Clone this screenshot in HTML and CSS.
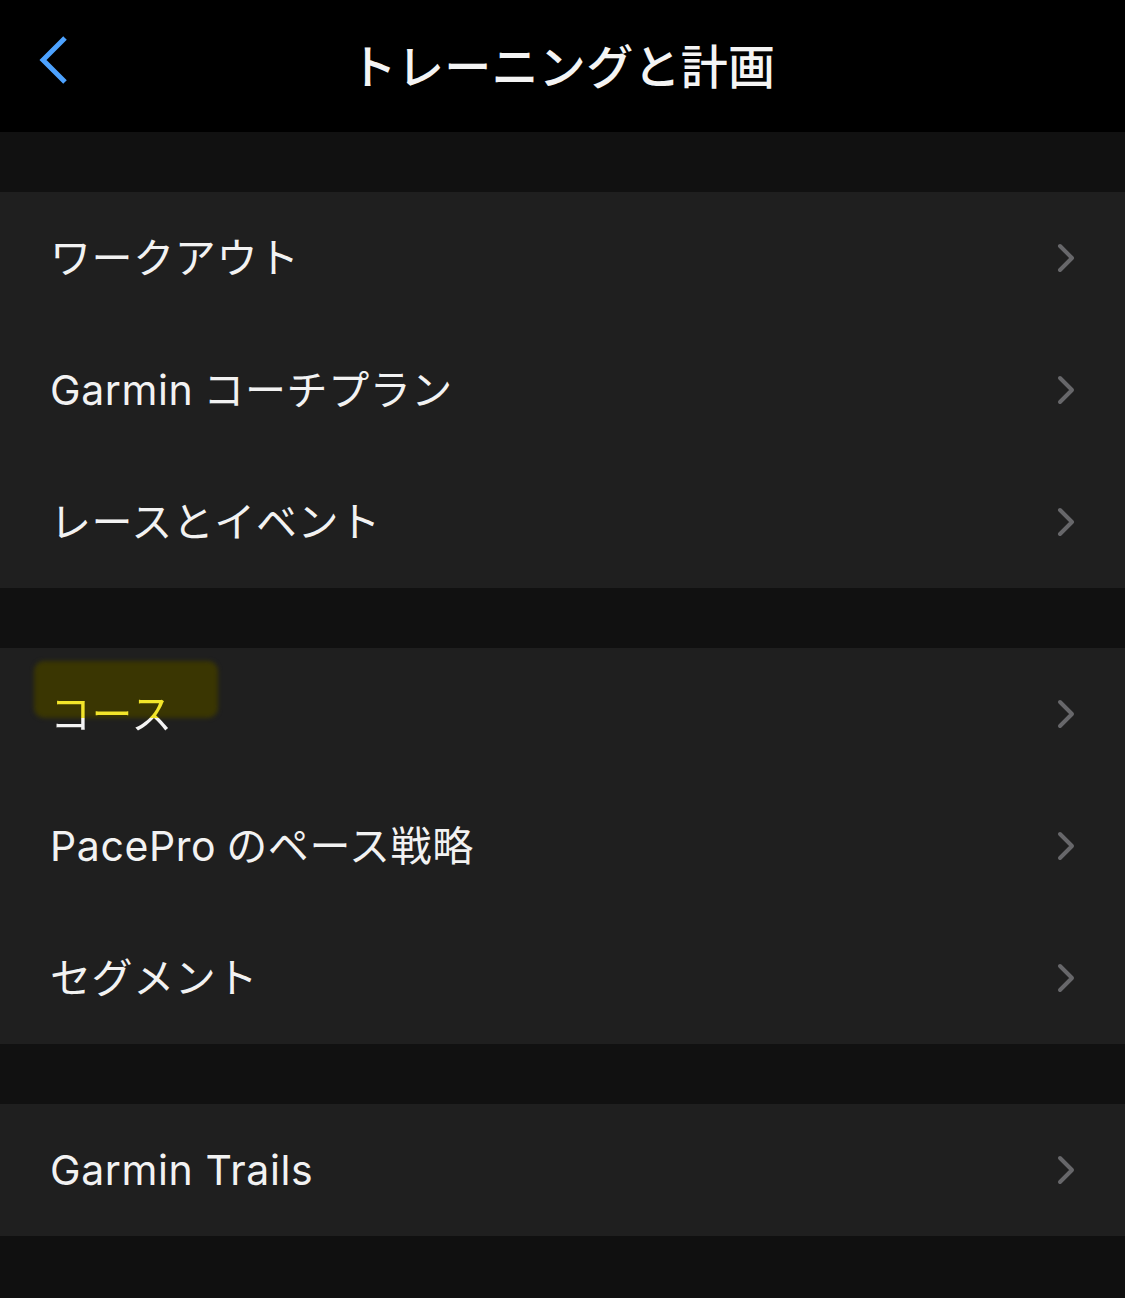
FILE: index.html
```html
<!DOCTYPE html>
<html lang="ja">
<head>
  <meta charset="UTF-8">
  <title>トレーニングと計画</title>
  <link rel="stylesheet" href="styles.css">
</head>
<body>
  <div class="navbar">
    <a class="back" href="#">
      <svg width="34" height="56" viewBox="0 0 34 56">
        <path d="M28 4 L6 26 L28 48" fill="none" stroke="#4da2ff" stroke-width="5" stroke-linecap="butt" stroke-linejoin="miter"/>
      </svg>
    </a>
    <h1>トレーニングと計画</h1>
  </div>

  <div class="spacer"></div>

  <div class="group">
    <a class="row" href="#"><span class="label">ワークアウト</span><svg class="chev" width="20" height="32" viewBox="0 0 20 32"><path d="M4 4 L16 16 L4 28"/></svg></a>
    <a class="row" href="#"><span class="label">Garmin<span class="gap"></span>コーチプラン</span><svg class="chev" width="20" height="32" viewBox="0 0 20 32"><path d="M4 4 L16 16 L4 28"/></svg></a>
    <a class="row" href="#"><span class="label">レースとイベント</span><svg class="chev" width="20" height="32" viewBox="0 0 20 32"><path d="M4 4 L16 16 L4 28"/></svg></a>
  </div>

  <div class="spacer"></div>

  <div class="group">
    <a class="row marked" href="#"><span class="marker"></span><span class="label">コース</span><svg class="chev" width="20" height="32" viewBox="0 0 20 32"><path d="M4 4 L16 16 L4 28"/></svg></a>
    <a class="row" href="#"><span class="label">PacePro<span class="gap"></span>のペース戦略</span><svg class="chev" width="20" height="32" viewBox="0 0 20 32"><path d="M4 4 L16 16 L4 28"/></svg></a>
    <a class="row" href="#"><span class="label">セグメント</span><svg class="chev" width="20" height="32" viewBox="0 0 20 32"><path d="M4 4 L16 16 L4 28"/></svg></a>
  </div>

  <div class="spacer"></div>

  <div class="group">
    <a class="row" href="#"><span class="label">Garmin Trails</span><svg class="chev" width="20" height="32" viewBox="0 0 20 32"><path d="M4 4 L16 16 L4 28"/></svg></a>
  </div>
</body>
</html>
```

FILE: styles.css
```css
body {
  font-family: Inter, "Noto Sans CJK JP", sans-serif;
  background: #101010;
  color: #f2f2f2;
  margin: 0;
  padding: 0;
  min-height: 1298px;
}

.navbar {
  background-color: #000000;
  height: 132px;
  display: flex;
  align-items: center;
  justify-content: center;
  position: relative;
}

.navbar h1 {
  margin: 0 0 6px 0;
  font-size: 47px;
  font-weight: 500;
  color: #f4f4f4;
  letter-spacing: 0.3px;
}

.back {
  position: absolute;
  left: 37px;
  top: 34px;
  display: block;
  width: 34px;
  height: 56px;
}

.spacer {
  height: 60px;
  background: #111111;
}

.group {
  background: #1f1f1f;
}

.row {
  display: flex;
  align-items: center;
  justify-content: space-between;
  height: 132px;
  padding: 0 49px 0 50px;
  color: #f2f2f2;
  text-decoration: none;
  position: relative;
}

.label {
  display: inline-block;
  font-size: 41px;
  line-height: 48px;
  letter-spacing: 0.6px;
  position: relative;
  z-index: 1;
}

.gap {
  display: inline-block;
  width: 10px;
}

.chev path {
  fill: none;
  stroke: #67676a;
  stroke-width: 4;
  stroke-linecap: round;
  stroke-linejoin: round;
}

/* yellow highlighter over the first word */
.marker {
  position: absolute;
  left: 34px;
  top: 13px;
  width: 184px;
  height: 57px;
  background: #3a3602;
  border-radius: 10px;
  filter: blur(2px);
}

.marked .label {
  background: linear-gradient(to bottom, #f2e52a 0%, #f2e52a 58%, #f4f4f4 58%, #f4f4f4 100%);
  -webkit-background-clip: text;
  background-clip: text;
  color: transparent;
}
```
